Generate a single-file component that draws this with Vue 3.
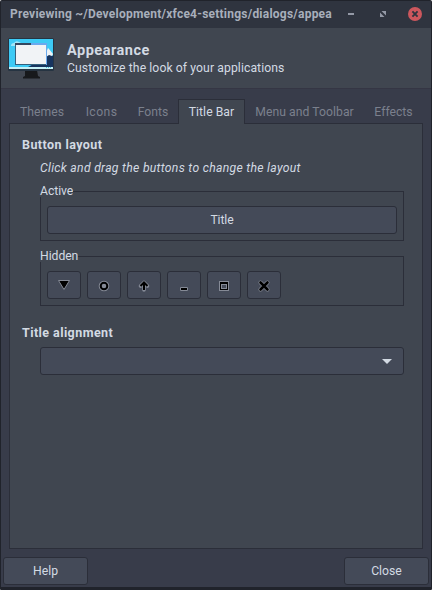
<script setup>
const tabs = [
  { label: 'Themes', id: 'themes' },
  { label: 'Icons', id: 'icons' },
  { label: 'Fonts', id: 'fonts' },
  { label: 'Title Bar', id: 'title-tab' },
  { label: 'Menu and Toolbar', id: 'menu' },
  { label: 'Effects', id: 'effects' },
]
const active = 'title-tab'
</script>

<template>
  <div class="window">
    <header class="titlebar">
      <span class="caption">Previewing ~/Development/xfce4-settings/dialogs/appea</span>
      <svg class="controls" width="89" height="26" viewBox="0 0 89 26">
        <path d="M6 12h6v2H6z" fill="#9499a6" />
        <path d="M39.500 10H44v4.500zM38 11.500V16h4.500z" fill="#9499a6" />
        <circle cx="73" cy="13" r="7" fill="#cc575d" />
        <path d="M70.400 10.400l5.200 5.200M75.600 10.400l-5.200 5.200" stroke="#2f343f" stroke-width="1.900" />
      </svg>
    </header>

    <section class="banner">
      <svg class="monitor" width="46" height="42" viewBox="0 0 46 42">
        <path d="M17 32h12l1 6 2 1v1.500H15V39l2-1z" fill="#17191c" />
        <rect x="0" y="0" width="46" height="33" rx="1.500" fill="#263442" />
        <rect x="1" y="1" width="44" height="30" fill="#3dcaf5" />
        <path d="M3 8q0-3 3-3 2-3 5-1l2 1v3z" fill="#a2e5f8" />
        <path d="M20 29q5-3 10-5l9-10 6 4v11z" fill="#17345f" />
        <path d="M38 15l2-5 1 1 4 5-1 2-3-1-3 2z" fill="#edf2f6" />
        <path d="M1 29h44v2H1z" fill="#c5f0f7" />
        <path d="M38 29h1v1h-1zm2 0h1v1h-1zm2 0h1v1h-1z" fill="#4dbfd8" />
        <path d="M7 5h32v22H7z" fill="#35607d" />
        <path d="M7 5h16v2H7z" fill="#344760" />
        <path d="M23 5h16v22h-1V7H23z" fill="#6aa9ee" />
        <path d="M8 7h30v19H8z" fill="#f1f3f6" />
      </svg>
      <div class="heading">
        <h1>Appearance</h1>
        <p>Customize the look of your applications</p>
      </div>
    </section>

    <nav class="tabs">
      <div v-for="t in tabs" :key="t.id" class="tab" :class="[t.id, { active: t.id === active }]">
        <span>{{ t.label }}</span>
      </div>
    </nav>

    <main class="page">
      <h2>Button layout</h2>
      <p class="hint">Click and drag the buttons to change the layout</p>

      <div class="group">
        <div class="legend"><span>Active</span></div>
        <div class="row"><button class="title-button">Title</button></div>
      </div>

      <div class="group hidden-group">
        <div class="legend"><span>Hidden</span></div>
        <div class="row">
          <button><svg width="16" height="16"><path d="M2.500 3.500h11L8 12.500z" fill="#000" stroke="#858a96" /></svg></button>
          <button><svg width="16" height="16"><circle cx="8" cy="9" r="3.300" fill="none" stroke="#858a96" stroke-width="4" /><circle cx="8" cy="9" r="3.300" fill="#858a96" stroke="#000" stroke-width="2" /></svg></button>
          <button><svg width="16" height="16"><path d="M4.500 9L8 5.500 11.500 9M8 6.500V13" fill="none" stroke="#858a96" stroke-width="3.600" stroke-linecap="round" stroke-linejoin="round" /><path d="M4.500 9L8 5.500 11.500 9M8 6.500V13" fill="none" stroke="#000" stroke-width="2" /></svg></button>
          <button><svg width="16" height="16"><path d="M4.500 10.500h7v3h-7z" fill="#000" stroke="#858a96" /></svg></button>
          <button><svg width="16" height="16"><path d="M3 4h10v10H3z" fill="#858a96" /><path d="M4 5h8v8H4z" /><path d="M5 7h6v5H5z" fill="#858a96" /><path d="M6 8h4v3H6z" fill="#444a58" /></svg></button>
          <button><svg width="16" height="16"><path d="M4.500 5.500l7 7m0-7l-7 7" stroke="#858a96" stroke-width="4" stroke-linecap="round" /><path d="M4.500 5.500l7 7m0-7l-7 7" stroke="#000" stroke-width="2.600" stroke-linecap="round" /></svg></button>
        </div>
      </div>

      <h2 class="align-title">Title alignment</h2>
      <div class="combo">
        <svg width="10" height="5"><path d="M0 0h10L5 5z" fill="#d3dae3" /></svg>
      </div>
    </main>

    <footer class="actions">
      <button>Help</button>
      <button>Close</button>
    </footer>
  </div>
</template>

<style>
body { margin: 0; background: #fff; }
</style>

<style scoped>
* { box-sizing: border-box; }
.window {
  width: 432px;
  height: 590px;
  display: flex;
  flex-direction: column;
  overflow: hidden;
  background: #383c4a;
  border: 1px solid #20232b;
  border-bottom-width: 3px;
  border-radius: 2px 2px 1px 1px;
  color: #d3dae3;
  font: 12.2px/16px Roboto, sans-serif;
}
h1, h2, p { margin: 0; white-space: nowrap; }
.titlebar {
  height: 27px;
  flex: none;
  display: flex;
  justify-content: space-between;
  background: #2f343f;
  color: #a8afbb;
  padding-left: 9px;
}
.caption { font-weight: 700; font-size: 12px; line-height: 26px; letter-spacing: .23px; white-space: nowrap; }
.controls { flex: none; }
.banner {
  height: 61px;
  flex: none;
  display: flex;
  background: #404650;
  border-bottom: 1px solid #353644;
}
.monitor { margin: 10px 0 0 7px; flex: none; }
.heading { margin: 12px 0 0 13px; }
h1 { font-size: 14.5px; line-height: 21px; font-weight: 700; letter-spacing: .5px; }
.heading p { line-height: 15px; letter-spacing: .09px; }
.tabs { display: flex; height: 34px; padding: 10px 0 0 8px; flex: none; }
.tab {
  height: 24px;
  padding-top: 5px;
  text-align: center;
  white-space: nowrap;
  color: #7b808d;
}
.tab.active {
  height: 25px;
  position: relative;
  background: #404650;
  border: 1px solid #2b2e39;
  border-bottom: 0;
  color: #d3dae3;
  padding-top: 4px;
}
.themes { width: 66px; }
.icons { width: 53px; letter-spacing: .4px; }
.fonts { width: 50px; }
.title-tab { width: 67px; letter-spacing: .05px; }
.menu { width: 119px; letter-spacing: .05px; }
.effects { width: 59px; }
.page {
  width: 414px;
  height: 426px;
  flex: none;
  margin-left: 8px;
  padding: 12px 18px 0 12px;
  border: 1px solid #2b2e39;
  background: #404650;
}
h2 { font-size: 12.5px; line-height: 18px; font-weight: 700; letter-spacing: .43px; }
.hint { margin: 6px 0 0 18px; font-style: italic; line-height: 16px; letter-spacing: .29px; }
.group { margin: 7px 0 0 18px; height: 57px; }
.legend { height: 14px; display: flex; line-height: 16px; }
.legend span { letter-spacing: -.05px; }
.legend::after { content: ''; flex: 1; border-top: 1px solid #2b2e39; border-right: 1px solid #2b2e39; margin-top: 8px; }
.row {
  height: 44px;
  border: 1px solid #2b2e39;
  border-top: 0;
  padding: 9px 6px 6px;
  display: flex;
  gap: 6px;
}
button {
  font: inherit;
  color: inherit;
  padding: 0;
  background: #444a58;
  border: 1px solid #2b2e39;
  border-radius: 3px;
  display: flex;
  align-items: center;
  justify-content: center;
}
.row button { width: 34px; height: 28px; flex: none; }
.row .title-button { width: 350px; letter-spacing: -.1px; }
.hidden-group { margin-top: 8px; }
.align-title { margin-top: 19px; }
.combo {
  height: 28px;
  margin: 5px 0 0 18px;
  border: 1px solid #2b2e39;
  border-radius: 3px;
  background: #444a58;
  display: flex;
  align-items: center;
  justify-content: flex-end;
  padding-right: 11px;
}
.actions { display: flex; justify-content: space-between; padding: 8px 2px 0; }
.actions button { width: 85px; height: 28px; }
</style>
